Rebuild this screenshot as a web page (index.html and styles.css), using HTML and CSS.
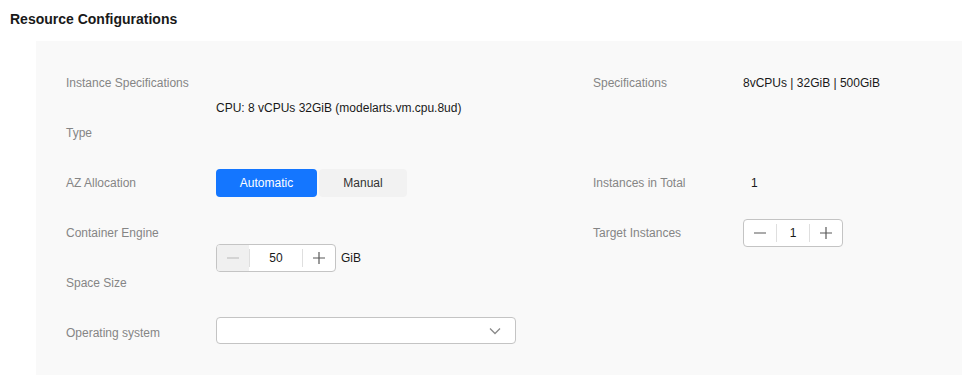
FILE: index.html
```html
<!DOCTYPE html>
<html lang="en">
<head>
    <meta charset="UTF-8">
    <title>Resource Configurations</title>
    <link rel="stylesheet" href="styles.css">
</head>
<body>
    <div class="section-title">Resource Configurations</div>

    <div class="panel">
        <div class="form-grid">
            <!-- Left column -->
            <div class="label r0 c1">Instance Specifications</div>
            <div class="value r1 c2">CPU: 8 vCPUs 32GiB (modelarts.vm.cpu.8ud)</div>
            <div class="label r2 c1">Type</div>

            <div class="label r4 c1">AZ Allocation</div>
            <div class="segmented r4 c2">
                <button class="seg-btn active">Automatic</button>
                <button class="seg-btn">Manual</button>
            </div>

            <div class="label r6 c1">Container Engine</div>
            <div class="stepper-wrap r7 c2">
                <div class="stepper wide">
                    <span class="step-btn disabled">
                        <svg width="12" height="12" viewBox="0 0 12 12"><path d="M0 6h12" stroke="currentColor" stroke-width="1.2"/></svg>
                    </span>
                    <span class="step-val">50</span>
                    <span class="step-btn">
                        <svg width="12" height="12" viewBox="0 0 12 12"><path d="M0 6h12M6 0v12" stroke="currentColor" stroke-width="1.2"/></svg>
                    </span>
                </div>
                <span class="unit">GiB</span>
            </div>
            <div class="label r8 c1">Space Size</div>

            <div class="label r10 c1">Operating system</div>
            <div class="select r10 c2">
                <svg width="12" height="8" viewBox="0 0 12 8"><path d="M1 1.5l5 5 5-5" fill="none" stroke="#8a8a8a" stroke-width="1.3"/></svg>
            </div>

            <!-- Right column -->
            <div class="label r0 c3">Specifications</div>
            <div class="value r0 c4">8vCPUs | 32GiB | 500GiB</div>

            <div class="label r4 c3">Instances in Total</div>
            <div class="value total r4 c4">1</div>

            <div class="label r6 c3">Target Instances</div>
            <div class="stepper narrow r6 c4">
                <span class="step-btn">
                    <svg width="12" height="12" viewBox="0 0 12 12"><path d="M0 6h12" stroke="currentColor" stroke-width="1.2"/></svg>
                </span>
                <span class="step-val">1</span>
                <span class="step-btn">
                    <svg width="12" height="12" viewBox="0 0 12 12"><path d="M0 6h12M6 0v12" stroke="currentColor" stroke-width="1.2"/></svg>
                </span>
            </div>
        </div>
    </div>
</body>
</html>
```

FILE: styles.css
```css
/* General */
body {
    margin: 0;
    font-family: 'Liberation Sans', Arial, sans-serif;
    font-size: 12px;
    color: #191919;
    background: #fff;
}

/* Section title */
.section-title {
    font-size: 14px;
    font-weight: bold;
    color: #191919;
    padding: 11px 0 0 10px;
    height: 30px;
}

/* Grey panel */
.panel {
    margin-left: 36px;
    background: #f9f9f9;
    padding: 29px 0 30px 30px;
    height: 275px;
}

/* Form grid: rows are 25px half-steps */
.form-grid {
    display: grid;
    grid-template-columns: 150px 377px 150px 1fr;
    grid-auto-rows: 25px;
}

.c1 { grid-column: 1; }
.c2 { grid-column: 2; }
.c3 { grid-column: 3; }
.c4 { grid-column: 4; }
.r0 { grid-row: 1; }
.r1 { grid-row: 2; }
.r2 { grid-row: 3; }
.r4 { grid-row: 5; }
.r6 { grid-row: 7; }
.r7 { grid-row: 8; }
.r8 { grid-row: 9; }
.r10 { grid-row: 11; }

.label,
.value {
    display: flex;
    align-items: center;
    white-space: nowrap;
}
.label {
    color: #858585;
}
.value {
    color: #191919;
}
.value.total {
    padding-left: 8px;
}

/* Segmented control */
.segmented {
    display: flex;
    gap: 2px;
    align-self: center;
}
.seg-btn {
    height: 28px;
    border: none;
    border-radius: 4px;
    font-family: inherit;
    font-size: 12px;
    background: #f2f2f2;
    color: #333;
    width: 88px;
    padding: 0;
}
.seg-btn.active {
    background: #1476ff;
    color: #fff;
    width: 101px;
}

/* Number stepper */
.stepper-wrap {
    display: flex;
    align-items: center;
    gap: 5px;
}
.stepper {
    display: flex;
    align-items: stretch;
    height: 28px;
    box-sizing: border-box;
    border: 1px solid #c4c4c4;
    border-radius: 4px;
    background: #fff;
    overflow: hidden;
    align-self: center;
}
.stepper.wide { width: 120px; }
.stepper.narrow { width: 100px; }
.step-btn {
    width: 32px;
    display: flex;
    align-items: center;
    justify-content: center;
    color: #595959;
}
.step-btn.disabled {
    background: #f0f0f0;
    color: #c2c2c2;
}
.step-val {
    flex: 1;
    display: flex;
    align-items: center;
    justify-content: center;
    color: #191919;
    margin: 4px 0;
    border-left: 1px solid #dfdfdf;
    border-right: 1px solid #dfdfdf;
}
.unit {
    color: #191919;
}

/* Select */
.select {
    align-self: start;
    margin-top: -3px;
    width: 300px;
    height: 27px;
    box-sizing: border-box;
    border: 1px solid #c4c4c4;
    border-radius: 4px;
    background: #fff;
    display: flex;
    align-items: center;
    justify-content: flex-end;
    padding-right: 14px;
}
```
